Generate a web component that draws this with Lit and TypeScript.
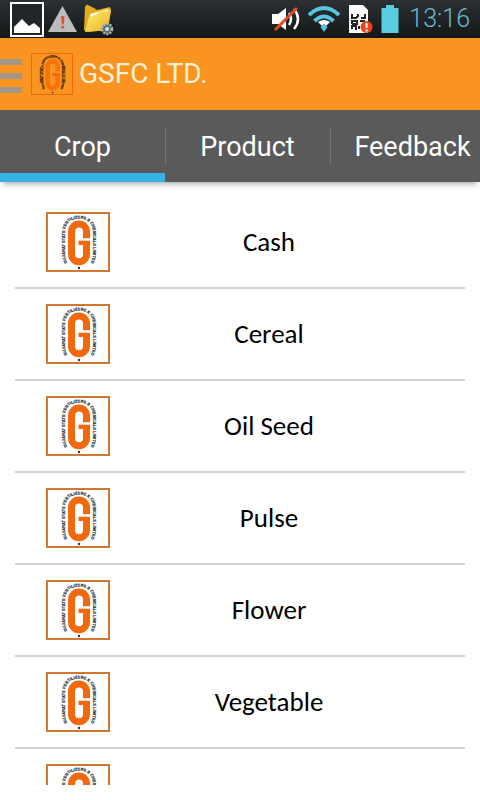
import { LitElement, html, css } from "lit";
import { customElement, property, state } from "lit/decorators.js";
import { classMap } from "lit/directives/class-map.js";

@customElement("gsfc-logo")
class GsfcLogo extends LitElement {
  @property({ type: Boolean, reflect: true }) compact = false;

  static styles = css`
    :host {
      display: block;
      flex: none;
      box-sizing: border-box;
      width: 64px;
      height: 60px;
      border: 2px solid #d4762f;
      background: #fff;
    }
    :host([compact]) {
      width: 42px;
      height: 42px;
      border: 1px solid #f0670c;
      background: none;
    }
    svg {
      display: block;
      width: 100%;
      height: 100%;
    }
    .ring {
      fill: #2c3540;
      font: bold 4px "Liberation Sans", sans-serif;
      stroke: #2c3540;
      stroke-width: 0.2;
    }
    .mark {
      fill: none;
      stroke: #f2690d;
      stroke-width: 7;
    }
    :host([compact]) .mark {
      stroke: #f9720d;
    }
    :host([compact]) .ring {
      fill: #5a3208;
      stroke: #5a3208;
      stroke-width: 0.5;
    }
  `;

  render() {
    return html`
      <svg viewBox="2 2 60 56" preserveAspectRatio="none" role="img" aria-label="GSFC logo">
        <path
          id="orbit"
          fill="none"
          d="M33 56.500C24 56.500 19 50 19 42V20C19 12 24 6.500 33 6.500S47 12 47 20V42C47 50 42 56.500 33 56.500"
        />
        <text class="ring" text-anchor="middle">
          <textPath href="#orbit" startOffset="50%">GUJARAT STATE FERTILIZERS &amp; CHEMICALS LIMITED</textPath>
        </text>
        <circle cx="33" cy="56" r="1.200" fill="#2c3540" />
        <path
          class="mark"
          d="M40.5 26.300V19.500A7.500 7.500 0 0 0 25.5 19.500V42.300A7.500 7.500 0 0 0 40.5 42.300V29"
        />
        <path d="M32.500 28.700H44V33H32.500Z" fill="#f2690d" />
      </svg>
    `;
  }
}

@customElement("status-bar")
class StatusBar extends LitElement {
  static styles = css`
    :host {
      display: flex;
      justify-content: space-between;
      align-items: center;
      flex: none;
      height: 38px;
      box-sizing: border-box;
      padding: 0 10px;
      background: linear-gradient(#2d3134, #141617);
    }
    .group {
      display: flex;
      align-items: center;
      height: 100%;
    }
    .left {
      gap: 4px;
    }
    .right {
      gap: 8px;
    }
    svg {
      display: block;
      flex: none;
    }
    .clock {
      margin-left: 2px;
      color: #65bdd2;
      font: 300 25px/38px Roboto, sans-serif;
    }
  `;

  render() {
    return html`
      <div class="group left">
        <svg width="34" height="36" viewBox="0 0 34 36" role="img" aria-label="Picture saved">
          <rect x="1" y="2" width="32" height="33" fill="#232628" stroke="#fff" stroke-width="2" />
          <path d="M4 32V26L12 18L19 25L24 22L30 27V32Z" fill="#fff" />
        </svg>
        <svg width="30" height="30" viewBox="0 0 30 30" role="img" aria-label="Warning">
          <path d="M14.500 2L29 28H0Z" fill="#bcbcbc" />
          <path d="M13 12H16.500L15.800 20.500H13.700ZM13.300 22H16.200V24.500H13.300Z" fill="#dd5432" />
        </svg>
        <svg width="34" height="36" viewBox="0 0 34 36" role="img" aria-label="File manager">
          <defs>
            <linearGradient id="folder" x1="0" y1="0" x2="1" y2="1">
              <stop offset="0" stop-color="#fff27a" />
              <stop offset="1" stop-color="#e9ae1c" />
            </linearGradient>
          </defs>
          <path d="M3 6Q4 3 6 4L12 7L15 9L28 6L29 9L26 29L6 31L2 29Z" fill="#e3ab1e" />
          <path d="M8 13L26 8L27 11L8 16Z" fill="#fffbd0" />
          <path d="M7 16L14 14L17 11L29 9L25 29L3 31Z" fill="url(#folder)" />
          <circle cx="25" cy="28" r="5" fill="#596a6c" stroke="#a9b8b8" stroke-width="2.500" stroke-dasharray="2 1.200" />
          <circle cx="25" cy="28" r="2" fill="#d5dfde" />
        </svg>
      </div>
      <div class="group right">
        <svg width="28" height="30" viewBox="0 0 28 30" role="img" aria-label="Sound off">
          <path d="M0 10H6L14 4V26L6 20H0Z" fill="#fff" />
          <path d="M17 9Q21 15 17 21M22 5Q30 15 22 25" fill="none" stroke="#fff" stroke-width="2.500" />
          <path d="M3 26L25 4" stroke="#df4a23" stroke-width="3" />
        </svg>
        <svg width="32" height="28" viewBox="0 0 32 28" role="img" aria-label="Wi-Fi">
          <path d="M1 10Q16 -4 31 10M6.500 16Q16 7 25.500 16" fill="none" stroke="#55c5e0" stroke-width="4" />
          <path d="M10 17Q16 13 22 17L16 23Z" fill="#fff" />
          <path d="M12.500 22L16 18.500L19.500 22L16 27Z" fill="#55c5e0" />
        </svg>
        <svg width="25" height="30" viewBox="0 0 25 30" role="img" aria-label="SIM card problem">
          <path d="M1 1H15L20 6V29H1Z" fill="#fff" />
          <path d="M4 10V14H8L10 12V10M17 10V14H13M4 20V17H9V20H4M12 17H17M4 25V22H8V26M11 22V25" fill="none" stroke="#202426" stroke-width="2" />
          <circle cx="18.500" cy="23" r="6" fill="#ee441e" />
          <path d="M17.600 19H19.600V24H17.600ZM17.600 25.500H19.600V27.500H17.600Z" fill="#fff" />
        </svg>
        <svg width="18" height="28" viewBox="0 0 18 28" role="img" aria-label="Battery full">
          <path d="M5 0H13V3H17.500V28H.500V3H5Z" fill="#5bcde1" />
        </svg>
        <span class="clock">13:16</span>
      </div>
    `;
  }
}

@customElement("app-root")
class AppRoot extends LitElement {
  @state() private active = "Crop";

  private tabs = ["Crop", "Product", "Feedback"];
  private crops = ["Cash", "Cereal", "Oil Seed", "Pulse", "Flower", "Vegetable", ""];

  static styles = css`
    :host {
      display: flex;
      flex-direction: column;
      height: 100vh;
      background: #fff;
      font-family: Roboto, sans-serif;
    }
    button {
      margin: 0;
      padding: 0;
      border: 0;
      background: none;
      font: inherit;
      color: inherit;
      cursor: pointer;
    }
    .bar {
      display: flex;
      align-items: center;
      flex: none;
      height: 72px;
      background: #f8941f;
    }
    .menu {
      display: flex;
      flex-direction: column;
      gap: 8px;
      width: 22px;
      margin-right: 9px;
      padding-top: 3px;
    }
    .line {
      height: 6px;
      background: #a29688;
    }
    h1 {
      margin: 0 0 0 6px;
      color: #fff0d6;
      font-size: 28px;
      font-weight: 400;
      line-height: 32px;
    }
    .tabs {
      display: flex;
      flex: none;
      height: 72px;
      overflow-x: auto;
      scrollbar-width: none;
      background: #5a5a5a;
      box-shadow: 0 5px 6px -3px #0005;
    }
    .tab {
      display: flex;
      flex: 1 0 165px;
      align-items: center;
      justify-content: center;
      box-sizing: border-box;
      border-top: 11px solid transparent;
      border-bottom: 9px solid transparent;
      color: #fff;
      font-size: 27px;
      line-height: 32px;
    }
    .tab.on {
      border-bottom-color: #35b3e5;
    }
    .split {
      flex: none;
      align-self: center;
      width: 1px;
      height: 36px;
      margin-right: -1px;
      background: #747474;
    }
    .list {
      flex: 1;
      min-height: 0;
      margin: 15px;
      padding: 0;
      overflow-y: auto;
      scrollbar-width: none;
      list-style: none;
    }
    .row {
      display: flex;
      align-items: center;
      width: 100%;
      box-sizing: border-box;
      padding: 15px 37px 15px 31px;
      border-bottom: 2px solid #d3d3d3;
      color: #000;
      font-family: Calibri, Carlito, "Noto Sans", sans-serif;
      font-size: 27px;
      line-height: 32px;
    }
    .name {
      flex: 1;
      text-align: center;
    }
  `;

  render() {
    return html`
      <status-bar></status-bar>
      <header class="bar">
        <button class="menu" aria-label="Open menu">
          <span class="line"></span><span class="line"></span><span class="line"></span>
        </button>
        <gsfc-logo compact></gsfc-logo>
        <h1>GSFC LTD.</h1>
      </header>
      <nav class="tabs" role="tablist">
        ${this.tabs.map(
          (tab, i) => html`
            ${i > 0 ? html`<span class="split"></span>` : ""}
            <button
              role="tab"
              aria-selected=${tab === this.active ? "true" : "false"}
              class=${classMap({ tab: true, on: tab === this.active })}
              @click=${() => (this.active = tab)}
            >
              ${tab}
            </button>
          `
        )}
      </nav>
      <ul class="list">
        ${this.crops.map(
          (crop) => html`
            <li>
              <button class="row"><gsfc-logo></gsfc-logo><span class="name">${crop}</span></button>
            </li>
          `
        )}
      </ul>
    `;
  }
}
